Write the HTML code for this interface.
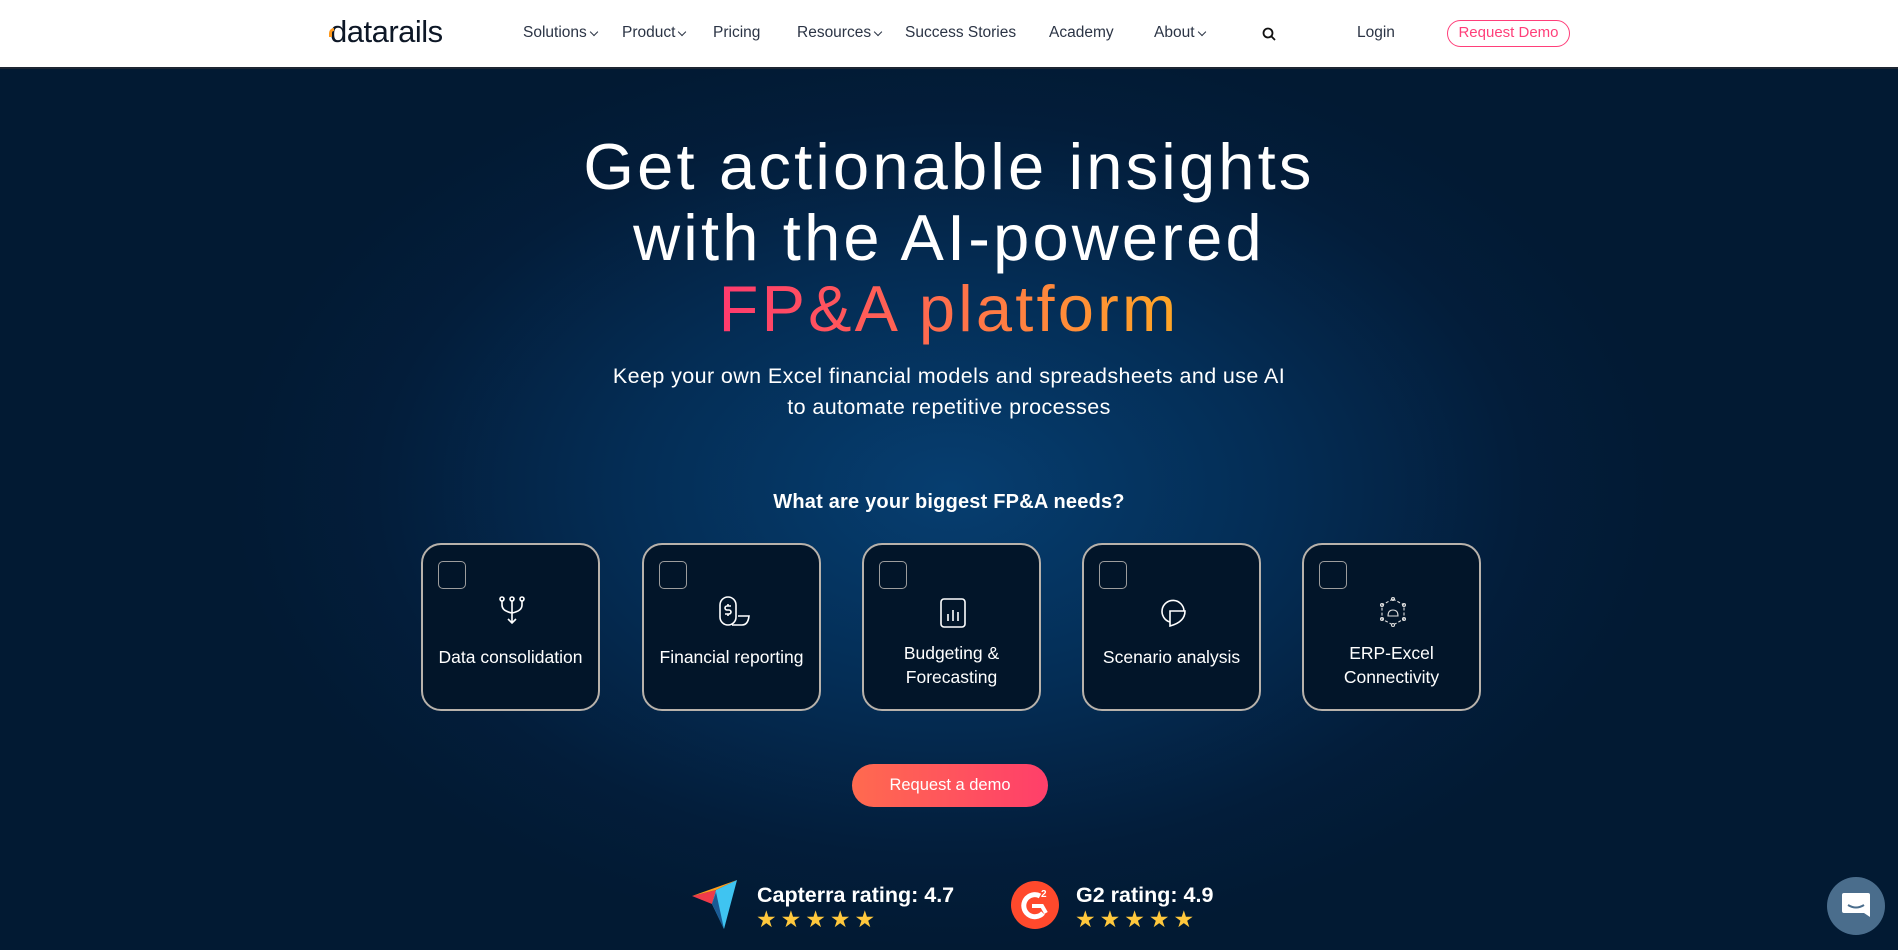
<!DOCTYPE html>
<html><head><meta charset="utf-8"><style>
*{margin:0;padding:0;box-sizing:border-box}
body{width:1898px;height:950px;overflow:hidden;font-family:"Liberation Sans",sans-serif;background:#031a33;position:relative}
.nav{position:absolute;left:0;top:0;width:1898px;height:69px;background:#fff;border-bottom:2px solid #1d2633}
.nav span{position:absolute;top:24px;font-size:15.5px;color:#2b3445}
.chev{display:inline-block;width:6px;height:6px;border-right:1.5px solid #2b3445;border-bottom:1.5px solid #2b3445;transform:rotate(45deg);margin-left:4px;position:relative;top:-2px}
.hero{position:absolute;left:0;top:69px;width:1898px;height:881px;background:radial-gradient(ellipse 720px 460px at 950px 420px,#063e70 0%,#042d55 45%,#031d3a 80%,#021a33 100%)}
.h{position:absolute;left:0;width:1898px;text-align:center;color:#fff;font-size:65px;letter-spacing:3.2px;line-height:72px}
.grad{background:linear-gradient(90deg,#ff3a6e 0%,#ff6a4f 45%,#ffa726 100%);-webkit-background-clip:text;color:transparent}
.sub{position:absolute;left:0;width:1898px;text-align:center;color:#fff;font-size:21.5px;letter-spacing:0.4px;line-height:31px}
.card{position:absolute;top:543px;width:179px;height:168px;border:2px solid #b8b2ab;border-radius:20px;background:#021529;color:#fff;text-align:center}
.card .cb{position:absolute;left:15px;top:16px;width:28px;height:28px;border:1.5px solid #9d9d9d;border-radius:5px}
.card svg{position:absolute;left:74px;top:50px}
.card .t{position:absolute;left:0;width:100%;top:100px;font-size:17.5px;line-height:24px}
.btn{position:absolute;left:852px;top:764px;width:196px;height:43px;border-radius:22px;background:linear-gradient(90deg,#ff6a4f,#ff3f6a);color:#fff;font-size:16.5px;text-align:center;line-height:43px}
.rt{position:absolute;color:#fff;font-weight:bold;font-size:21.5px}
.stars{position:absolute;font-size:23px;letter-spacing:4px;color:#ffc83d}
</style></head><body>
<div class="nav">
<span style="left:330px;top:14px;font-size:31px;color:#0d1726;letter-spacing:-0.5px">datarails</span>
<div style="position:absolute;left:329px;top:28px;width:5px;height:9px;border-left:3px solid #ff9a1f;border-top:3px solid #ff9a1f;border-radius:6px 0 0 0"></div>
<span style="left:523px">Solutions<i class="chev"></i></span>
<span style="left:622px">Product<i class="chev"></i></span>
<span style="left:713px">Pricing</span>
<span style="left:797px">Resources<i class="chev"></i></span>
<span style="left:905px">Success Stories</span>
<span style="left:1049px">Academy</span>
<span style="left:1154px">About<i class="chev"></i></span>
<svg style="position:absolute;left:1262px;top:27px" width="14" height="14" viewBox="0 0 14 14"><circle cx="6" cy="6" r="4.5" fill="none" stroke="#111" stroke-width="1.8"/><path d="M9.3 9.3L13 13" stroke="#111" stroke-width="1.8"/></svg>
<span style="left:1357px">Login</span>
<div style="position:absolute;left:1447px;top:20px;width:123px;height:27px;border:1.5px solid #ff3f7a;border-radius:14px;color:#ff3f7a;font-size:15px;text-align:center;line-height:24px">Request Demo</div>
</div>
<div class="hero"></div>
<div class="h" style="top:131px">Get actionable insights</div>
<div class="h" style="top:202px">with the AI-powered</div>
<div class="h" style="top:273px"><span class="grad">FP&amp;A platform</span></div>
<div class="sub" style="top:361px">Keep your own Excel financial models and spreadsheets and use AI<br>to automate repetitive processes</div>
<div class="sub" style="top:487px;font-weight:bold;font-size:20px;letter-spacing:0.2px">What are your biggest FP&amp;A needs?</div>

<div class="card" style="left:421px"><div class="cb"></div>
<svg width="30" height="34" viewBox="0 0 30 34" fill="none" stroke="#fff" stroke-width="1.6"><circle cx="5" cy="4" r="2"/><circle cx="15" cy="4" r="2"/><circle cx="25" cy="4" r="2"/><path d="M5 6v4q0 6 10 8M25 6v4q0 6-10 8M15 6v22M11 24l4 4 4-4"/></svg>
<div class="t" style="top:100px">Data consolidation</div></div>
<div class="card" style="left:642px"><div class="cb"></div>
<svg width="34" height="34" viewBox="0 0 34 34" fill="none" stroke="#fff" stroke-width="1.6"><rect x="2" y="2" width="16" height="28" rx="8"/><path d="M13 11h-4a2 2 0 000 4h2a2 2 0 010 4h-4M10 9v2M10 19v2M14 30h10q6 0 7-9h-11"/></svg>
<div class="t">Financial reporting</div></div>
<div class="card" style="left:862px"><div class="cb"></div>
<svg width="30" height="34" viewBox="0 0 30 34" fill="none" stroke="#fff" stroke-width="1.6"><rect x="3" y="4" width="24" height="28" rx="3"/><path d="M10 26v-7M15 26v-11M20 26v-9"/></svg>
<div class="t" style="top:96px">Budgeting &amp;<br>Forecasting</div></div>
<div class="card" style="left:1082px"><div class="cb"></div>
<svg width="30" height="34" viewBox="0 0 30 34" fill="none" stroke="#fff" stroke-width="1.6"><path d="M12 27a11 11 0 1 1 14-11"/><path d="M12 16h15q0 11-15 15z"/></svg>
<div class="t">Scenario analysis</div></div>
<div class="card" style="left:1302px"><div class="cb"></div>
<svg width="30" height="34" viewBox="0 0 30 34" fill="none" stroke="#ddd" stroke-width="1.1"><path d="M15 4L26 10V24L15 30L4 24V10Z" stroke-dasharray="3 2"/><circle cx="15" cy="4" r="1.5"/><circle cx="26" cy="10" r="1.5"/><circle cx="26" cy="24" r="1.5"/><circle cx="15" cy="30" r="1.5"/><circle cx="4" cy="24" r="1.5"/><circle cx="4" cy="10" r="1.5"/><path d="M10 21q0-6 5-6t5 6z"/></svg>
<div class="t" style="top:96px">ERP-Excel<br>Connectivity</div></div>

<div class="btn">Request a demo</div>

<svg style="position:absolute;left:692px;top:880px" width="50" height="50" viewBox="0 0 50 50"><path d="M0 16L24 10L20 24Z" fill="#ef3b4a"/><path d="M0 16L45 0L24 10Z" fill="#ff9d1c"/><path d="M24 10L45 0L32 49L20 24Z" fill="#3fc4f1"/><path d="M20 24L32 49L24 12Z" fill="#1a5a94"/></svg>
<div class="rt" style="left:757px;top:883px">Capterra rating: 4.7</div>
<div class="stars" style="left:756px;top:906px">★★★★★</div>
<svg style="position:absolute;left:1010px;top:880px" width="50" height="50" viewBox="0 0 50 50"><circle cx="25" cy="25" r="24" fill="#ff492c"/><path d="M30 16a11 11 0 1 0 3 17" fill="none" stroke="#fff" stroke-width="5"/><path d="M22 26h10l4 7" fill="none" stroke="#fff" stroke-width="4"/><text x="31" y="17" fill="#fff" font-size="10" font-weight="bold" font-family="Liberation Sans">2</text></svg>
<div class="rt" style="left:1076px;top:883px">G2 rating: 4.9</div>
<div class="stars" style="left:1075px;top:906px">★★★★★</div>

<div style="position:absolute;left:1827px;top:877px;width:58px;height:58px;border-radius:50%;background:#4a6d8c"></div>
<svg style="position:absolute;left:1840px;top:891px" width="32" height="30" viewBox="0 0 32 30"><path d="M4 2h24a2 2 0 012 2v22l-6-4H4a2 2 0 01-2-2V4a2 2 0 012-2z" fill="#fff"/><path d="M8 14q8 5 16 0" stroke="#4a6d8c" stroke-width="2" fill="none"/></svg>
</body></html>
